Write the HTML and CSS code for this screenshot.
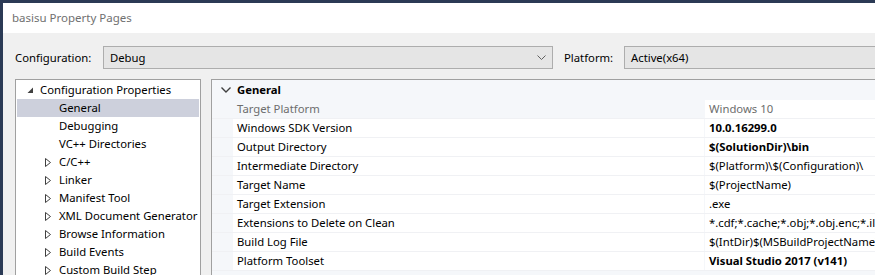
FILE: index.html
```html
<!DOCTYPE html>
<html lang="en">
<head>
    <meta charset="UTF-8">
    <title>basisu Property Pages</title>
    <link rel="stylesheet" href="styles.css">
</head>
<body>
    <div class="window">
        <div class="titlebar">basisu Property Pages</div>

        <div class="client">
            <div class="config-row">
                <span class="label">Configuration:</span>
                <div class="combo combo-config">
                    <span>Debug</span>
                    <svg class="arrow" width="9" height="6" viewBox="0 0 9 6"><polyline points="0.5,0.5 4.5,4.5 8.5,0.5" fill="none" stroke="#606060" stroke-width="1"/></svg>
                </div>
                <span class="label label-platform">Platform:</span>
                <div class="combo combo-platform">
                    <span>Active(x64)</span>
                </div>
            </div>

            <div class="panels">
                <div class="tree">
                    <div class="node root">
                        <svg class="tri" width="7" height="7" viewBox="0 0 7 7"><polygon points="6,0.5 6,6 0.5,6" fill="#404040"/></svg>
                        <span>Configuration Properties</span>
                    </div>
                    <div class="node leaf selected"><span>General</span></div>
                    <div class="node leaf"><span>Debugging</span></div>
                    <div class="node leaf"><span>VC++ Directories</span></div>
                    <div class="node child"><svg class="tri" width="6" height="9" viewBox="0 0 6 9"><polygon points="0.5,0.5 5.5,4.5 0.5,8.5" fill="none" stroke="#404040"/></svg><span>C/C++</span></div>
                    <div class="node child"><svg class="tri" width="6" height="9" viewBox="0 0 6 9"><polygon points="0.5,0.5 5.5,4.5 0.5,8.5" fill="none" stroke="#404040"/></svg><span>Linker</span></div>
                    <div class="node child"><svg class="tri" width="6" height="9" viewBox="0 0 6 9"><polygon points="0.5,0.5 5.5,4.5 0.5,8.5" fill="none" stroke="#404040"/></svg><span>Manifest Tool</span></div>
                    <div class="node child"><svg class="tri" width="6" height="9" viewBox="0 0 6 9"><polygon points="0.5,0.5 5.5,4.5 0.5,8.5" fill="none" stroke="#404040"/></svg><span>XML Document Generator</span></div>
                    <div class="node child"><svg class="tri" width="6" height="9" viewBox="0 0 6 9"><polygon points="0.5,0.5 5.5,4.5 0.5,8.5" fill="none" stroke="#404040"/></svg><span>Browse Information</span></div>
                    <div class="node child"><svg class="tri" width="6" height="9" viewBox="0 0 6 9"><polygon points="0.5,0.5 5.5,4.5 0.5,8.5" fill="none" stroke="#404040"/></svg><span>Build Events</span></div>
                    <div class="node child"><svg class="tri" width="6" height="9" viewBox="0 0 6 9"><polygon points="0.5,0.5 5.5,4.5 0.5,8.5" fill="none" stroke="#404040"/></svg><span>Custom Build Step</span></div>
                </div>

                <div class="grid">
                    <div class="category">
                        <svg class="chev" width="10" height="6" viewBox="0 0 10 6"><polyline points="0.5,0.5 5,5 9.5,0.5" fill="none" stroke="#404040" stroke-width="1.4"/></svg>
                        <span>General</span>
                    </div>
                    <div class="prop disabled">
                        <div class="name">Target Platform</div>
                        <div class="value">Windows 10</div>
                    </div>
                    <div class="prop">
                        <div class="name">Windows SDK Version</div>
                        <div class="value bold">10.0.16299.0</div>
                    </div>
                    <div class="prop">
                        <div class="name">Output Directory</div>
                        <div class="value bold">$(SolutionDir)\bin</div>
                    </div>
                    <div class="prop">
                        <div class="name">Intermediate Directory</div>
                        <div class="value">$(Platform)\$(Configuration)\</div>
                    </div>
                    <div class="prop">
                        <div class="name">Target Name</div>
                        <div class="value">$(ProjectName)</div>
                    </div>
                    <div class="prop">
                        <div class="name">Target Extension</div>
                        <div class="value">.exe</div>
                    </div>
                    <div class="prop">
                        <div class="name">Extensions to Delete on Clean</div>
                        <div class="value">*.cdf;*.cache;*.obj;*.obj.enc;*.ilk</div>
                    </div>
                    <div class="prop">
                        <div class="name">Build Log File</div>
                        <div class="value">$(IntDir)$(MSBuildProjectName)</div>
                    </div>
                    <div class="prop">
                        <div class="name">Platform Toolset</div>
                        <div class="value bold">Visual Studio 2017 (v141)</div>
                    </div>
                </div>
            </div>
        </div>
    </div>
</body>
</html>
```

FILE: styles.css
```css
* {
    margin: 0;
    padding: 0;
    box-sizing: border-box;
}

body {
    font-family: 'Noto Sans', 'Open Sans', sans-serif;
    font-size: 11.3px;
    color: #000;
    background: #f0f0f0;
    width: 875px;
    height: 275px;
    overflow: hidden;
}

svg {
    flex-shrink: 0;
}

.window {
    width: 1000px;
    height: 275px;
    border-top: 3px solid #2b3a55;
    border-left: 3px solid #2b3a55;
    background: #f0f0f0;
}

.titlebar {
    height: 30px;
    line-height: 30px;
    padding-left: 9px;
    background: #fff;
    color: #707070;
    font-size: 11.5px;
}

.client {
    padding: 13px 0 0 12px;
}

.config-row {
    display: flex;
    align-items: center;
    height: 23px;
}

.label {
    width: 88px;
}

.label-platform {
    width: 60px;
    margin-left: 11px;
}

.combo {
    height: 23px;
    background: #e5e5e5;
    border: 1px solid #adadad;
    display: flex;
    align-items: center;
    padding-left: 6px;
}

.combo-config {
    width: 450px;
    justify-content: space-between;
    padding-right: 6px;
}

.combo-platform {
    width: 300px;
}

.panels {
    display: flex;
    margin-top: 10px;
    gap: 10px;
}

.tree {
    width: 186px;
    height: 220px;
    background: #fff;
    border: 1px solid #a0a0a0;
    padding: 1px 1px 0 1px;
    overflow: hidden;
}

.node {
    height: 18px;
    line-height: 18px;
    display: flex;
    align-items: center;
    white-space: nowrap;
}

.node.root {
    padding-left: 10px;
}

.node.root .tri {
    margin-right: 6px;
}

.node.leaf {
    padding-left: 42px;
}

.node.child {
    padding-left: 28px;
}

.node.child .tri {
    margin-right: 8px;
}

.node.selected {
    background: #cdd0dc;
}

.grid {
    width: 700px;
    height: 220px;
    background: #f5f7fa;
    border: 1px solid #a0a0a0;
}

.category {
    height: 20px;
    line-height: 20px;
    display: flex;
    align-items: center;
    font-weight: bold;
    padding-left: 9px;
}

.chev {
    margin-right: 6px;
}

.prop {
    display: flex;
    height: 19px;
    padding-left: 21px;
    border-bottom: 1px solid #f0f1f4;
}

.prop .name,
.prop .value {
    height: 18px;
    line-height: 18px;
    background: #fff;
    padding-left: 4px;
    white-space: nowrap;
    overflow: hidden;
}

.prop .name {
    width: 471px;
    margin-right: 1px;
}

.prop .value {
    flex: 1;
}

.prop.disabled .name {
    background: transparent;
    color: #6d6d6d;
}

.prop.disabled .value {
    color: #6d6d6d;
}

.bold {
    font-weight: bold;
}
```
